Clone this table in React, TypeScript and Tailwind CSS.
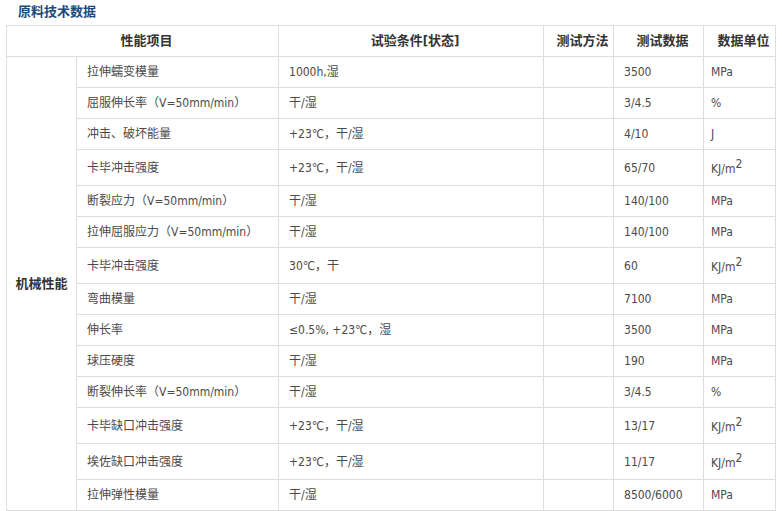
import React from "react";

interface Row {
  name: string;
  cond: string;
  method: string;
  value: string;
  unit: string;
  sup?: boolean;
}

const rows: Row[] = [
  { name: "拉伸蠕变模量", cond: "1000h,湿", method: "", value: "3500", unit: "MPa" },
  { name: "屈服伸长率（V=50mm/min）", cond: "干/湿", method: "", value: "3/4.5", unit: "%" },
  { name: "冲击、破坏能量", cond: "+23℃，干/湿", method: "", value: "4/10", unit: "J" },
  { name: "卡毕冲击强度", cond: "+23℃，干/湿", method: "", value: "65/70", unit: "KJ/m", sup: true },
  { name: "断裂应力（V=50mm/min）", cond: "干/湿", method: "", value: "140/100", unit: "MPa" },
  { name: "拉伸屈服应力（V=50mm/min）", cond: "干/湿", method: "", value: "140/100", unit: "MPa" },
  { name: "卡毕冲击强度", cond: "30℃，干", method: "", value: "60", unit: "KJ/m", sup: true },
  { name: "弯曲模量", cond: "干/湿", method: "", value: "7100", unit: "MPa" },
  { name: "伸长率", cond: "≤0.5%, +23℃，湿", method: "", value: "3500", unit: "MPa" },
  { name: "球压硬度", cond: "干/湿", method: "", value: "190", unit: "MPa" },
  { name: "断裂伸长率（V=50mm/min）", cond: "干/湿", method: "", value: "3/4.5", unit: "%" },
  { name: "卡毕缺口冲击强度", cond: "+23℃，干/湿", method: "", value: "13/17", unit: "KJ/m", sup: true },
  { name: "埃佐缺口冲击强度", cond: "+23℃，干/湿", method: "", value: "11/17", unit: "KJ/m", sup: true },
  { name: "拉伸弹性模量", cond: "干/湿", method: "", value: "8500/6000", unit: "MPa" },
];

const td = "border border-[#dddddd] px-[10px] align-middle";
const th = "border border-[#dddddd] pl-[12px] pr-[4px] text-center font-bold text-[13px] text-[#333333]";

export default function App() {
  return (
    <div className="w-[782px] h-[511px] bg-white overflow-hidden font-['DejaVu_Sans_Condensed','Noto_Sans_CJK_SC',sans-serif]">
      {/* 标题 */}
      <div className="h-[25px] pl-[18px] pt-[3px] text-[13px] leading-[18px] font-bold text-[#1b4a7a]">
        原料技术数据
      </div>

      {/* 表格 */}
      <table className="ml-[6px] w-[769px] table-fixed border-collapse text-[12px] leading-[16px] text-[#4a4a4a]">
        <colgroup>
          <col className="w-[70px]" />
          <col className="w-[202px]" />
          <col className="w-[265px]" />
          <col className="w-[70px]" />
          <col className="w-[90px]" />
          <col className="w-[72px]" />
        </colgroup>
        <thead>
          <tr className="h-[31px]">
            <th colSpan={2} className={th}>性能项目</th>
            <th className={th}>试验条件[状态]</th>
            <th className={th}>测试方法</th>
            <th className={th}>测试数据</th>
            <th className={th}>数据单位</th>
          </tr>
        </thead>
        <tbody>
          {rows.map((row, i) => (
            <tr key={i} className={row.sup ? "h-[36px]" : "h-[31px]"}>
              {i === 0 && (
                <td
                  rowSpan={rows.length}
                  className="border border-[#dddddd] text-center font-bold text-[13px] text-[#333333]"
                >
                  机械性能
                </td>
              )}
              <td className={td}>{row.name}</td>
              <td className={td}>{row.cond}</td>
              <td className={td}>{row.method}</td>
              <td className={td}>{row.value}</td>
              <td className="border border-[#dddddd] pl-[7px] align-middle">
                {row.unit}
                {row.sup && (
                  <span className="inline-block align-[5px] text-[12px] leading-none">2</span>
                )}
              </td>
            </tr>
          ))}
        </tbody>
      </table>
    </div>
  );
}
